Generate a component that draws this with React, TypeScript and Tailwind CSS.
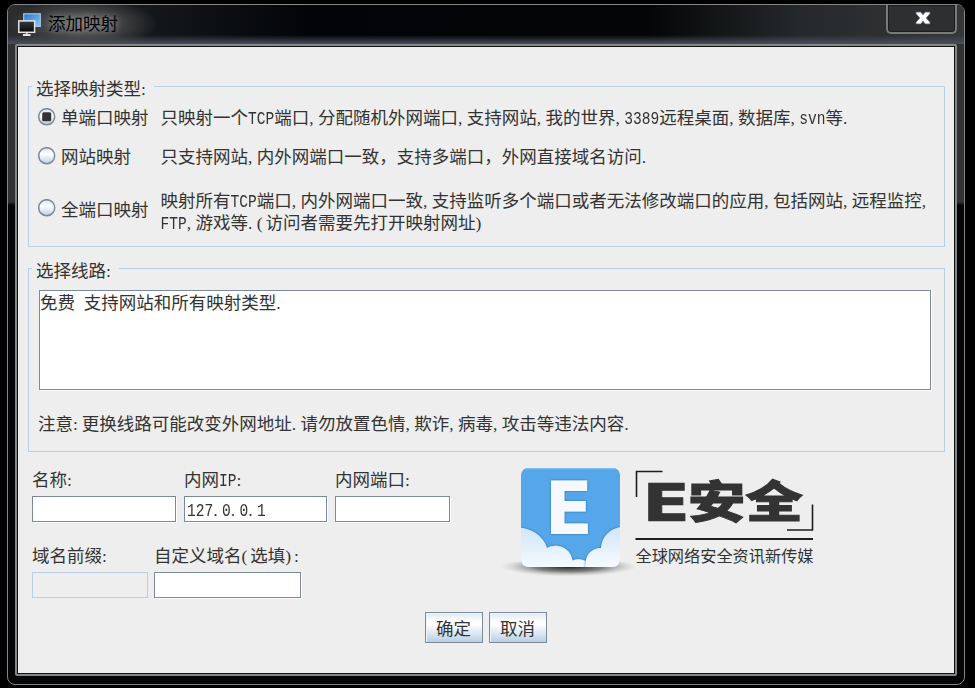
import type { ReactNode } from 'react';

const CJK = "font-['Noto_Sans_CJK_SC',sans-serif]";
const LATIN = "inline-block h-[14px] origin-[0_11px] scale-y-[1.2] whitespace-pre font-['Liberation_Mono',monospace] text-[14.58px] leading-[14px]";
const PUNCT = "inline-block h-[18px] w-[8.75px] whitespace-pre font-['Liberation_Serif',serif] leading-[18px]";

/* Sets half-width characters on the half-em grid of the Chinese text around them. */
function T({ children }: { children: string }) {
  const parts = children.match(/[a-zA-Z0-9 ]+|[.,:()]|[^\x20-\x7e]+/g) ?? [];
  return (
    <>
      {parts.map((p, i) => {
        const style = /^[a-zA-Z0-9 ]/.test(p) ? LATIN : /^[.,:()]/.test(p) ? PUNCT : '';
        return <span key={i} className={style}>{p}</span>;
      })}
    </>
  );
}

function Radio({ checked = false }: { checked?: boolean }) {
  return (
    <svg width="18" height="18" viewBox="0 0 18 18" className="-mt-px shrink-0">
      <defs>
        <linearGradient id="radioFill" x1="0" y1="0" x2="0" y2="1">
          <stop offset="0" stopColor="#d3e2ef" />
          <stop offset="0.4" stopColor="#ffffff" />
          <stop offset="1" stopColor="#b8cfe5" />
        </linearGradient>
      </defs>
      <circle cx="8.7" cy="8.7" r="8" fill="url(#radioFill)" stroke="#7a8a99" strokeWidth="1.5" />
      {checked && <rect x="4.2" y="4.2" width="9" height="9" rx="1.5" fill="#333" />}
    </svg>
  );
}

function Option({ label, checked, height, children }: { label: string; checked?: boolean; height: string; children: ReactNode }) {
  return (
    <div className={`flex items-center whitespace-nowrap ${height}`}>
      <Radio checked={checked} />
      <span className="ml-[5px] w-[99.5px] shrink-0">{label}</span>
      <span>{children}</span>
    </div>
  );
}

function Field({ label, width, value = '', disabled = false }: { label: string; width: string; value?: string; disabled?: boolean }) {
  return (
    <label className={`flex flex-col ${width}`}>
      <span className="h-[28px] whitespace-nowrap"><T>{label}</T></span>
      <span
        className={`block h-[26px] w-full border pl-[2px] pt-px ${
          disabled ? 'border-[#b8cfe5] bg-[#eeeeee]' : 'border-[#7a8a99] bg-white shadow-[1px_1px_0_#fff]'
        }`}
      >
        <T>{value}</T>
      </span>
    </label>
  );
}

function Button({ children }: { children: string }) {
  return (
    <button className="h-[31px] w-[58px] border border-[#7a8a99] bg-[linear-gradient(#dde8f3,#ffffff_30%,#ffffff_40%,#b8cfe5)] pr-px leading-[29px] shadow-[inset_1px_1px_0_#eef4fa]">
      {children}
    </button>
  );
}

function MonitorsIcon() {
  return (
    <svg width="24" height="24" viewBox="0 0 24 24">
      <defs>
        <linearGradient id="screen" x1="0" y1="0" x2="1" y2="1">
          <stop offset="0" stopColor="#2777c9" />
          <stop offset="1" stopColor="#86c8ff" />
        </linearGradient>
        <linearGradient id="darkScreen" x1="0" y1="0" x2="0" y2="1">
          <stop offset="0" stopColor="#3a3a3a" />
          <stop offset="1" stopColor="#080808" />
        </linearGradient>
      </defs>
      <rect x="5.7" y="1.8" width="16.6" height="12.6" fill="url(#screen)" stroke="#a9c4da" strokeWidth="1.2" />
      <rect x="0.8" y="8.9" width="15.8" height="11.4" fill="url(#darkScreen)" stroke="#e4e4e4" strokeWidth="1.5" />
      <path d="M8.700 20.500v2M5 23h7.500" stroke="#e4e4e4" strokeWidth="1.8" />
    </svg>
  );
}

function Logo() {
  return (
    <svg width="330" height="135" viewBox="500 455 330 135" className="mt-px">
      <defs>
        <linearGradient id="cloud" x1="0" y1="0" x2="0" y2="1">
          <stop offset="0" stopColor="#d0e6fa" />
          <stop offset="1" stopColor="#fdfeff" />
        </linearGradient>
        <radialGradient id="ground">
          <stop offset="0" stopColor="#111" stopOpacity="0.95" />
          <stop offset="0.5" stopColor="#333" stopOpacity="0.6" />
          <stop offset="1" stopColor="#999" stopOpacity="0" />
        </radialGradient>
        <clipPath id="tile"><rect x="521" y="468" width="99" height="99" rx="7" /></clipPath>
        <clipPath id="below"><rect x="490" y="562" width="160" height="30" /></clipPath>
        <filter id="soft" x="-20%" y="-20%" width="140%" height="140%">
          <feDropShadow dx="0" dy="0" stdDeviation="1.3" floodColor="#155a99" floodOpacity="0.8" />
        </filter>
      </defs>
      <ellipse cx="569" cy="566.5" rx="68" ry="10" fill="url(#ground)" clipPath="url(#below)" />
      <rect x="521" y="468" width="99" height="99" rx="7" fill="#56a7e9" />
      <path d="M526 468.600h89" stroke="#7dc0f5" strokeWidth="1.2" />
      <g clipPath="url(#tile)">
        <g fill="url(#cloud)" filter="url(#soft)">
          <path d="M515 528c14-1.500 28 7 32 20 10-6 24 0 25.500 12.500 5-2 9-1.500 13 .5l1.500 14h-72z" />
        </g>
        <g fill="url(#cloud)" filter="url(#soft)">
          <path d="M586.500 574c-4-16 3-26 14.500-26 1-12 9-21 26-22v48z" />
        </g>
      </g>
      <text
        transform="translate(544.400 534) scale(0.98 1)"
        className="font-['DejaVu_Sans',sans-serif] font-bold"
        fontSize="72.5"
        fill="#f5f9fe"
        filter="url(#soft)"
      >
        E
      </text>
      <path d="M636.500 497V471.500h26M812.500 504.500V530h-25.500" fill="none" stroke="#1d1d1f" strokeWidth="1.6" />
      <text
        transform="translate(642.300 520.700) scale(1.36 1)"
        className="font-['DejaVu_Sans',sans-serif] font-bold"
        fontSize="51.5"
        fill="#333"
        stroke="#333"
        strokeWidth="0.6"
      >
        E
      </text>
      <text
        transform="translate(688 517.500) scale(1.29 1)"
        className="font-['Noto_Sans_CJK_SC',sans-serif] font-black"
        fontSize="44.5"
        fill="#333"
        stroke="#333"
        strokeWidth="1"
      >
        安全
      </text>
      <path d="M635.500 539H813" stroke="#1d1d1f" strokeWidth="2" />
      <text
        x="635.5"
        y="562"
        textLength="178"
        className="font-['Noto_Sans_CJK_SC',sans-serif]"
        fontSize="16.2"
        fill="#333"
      >
        全球网络安全资讯新传媒
      </text>
    </svg>
  );
}

export default function App() {
  return (
    <div className={`h-[688px] w-[975px] overflow-hidden bg-black pl-[7px] pt-[4px] text-[17.5px] leading-[22px] text-[#333] ${CJK}`}>
      <div className="flex h-[681px] w-[958px] flex-col rounded-[8px] border-[1.5px] border-[#858787] bg-[linear-gradient(#303234_0,#303234_197px,#040607_200px)]">
        <header className="flex h-[39px] shrink-0 justify-between rounded-t-[6px] bg-[radial-gradient(ellipse_75px_26px_at_75px_19px,#777_0%,#55555599_55%,transparent_100%),linear-gradient(to_top,#46505f_0,#46505f00_9px),linear-gradient(90deg,#2b2d2f_0,#15181b_140px,#020407_300px,#030506_640px,#25282a_790px,#353638)]">
          <div className="flex pl-[10px] pt-[7px]">
            <MonitorsIcon />
            <h1 className="ml-[6px] text-black [text-shadow:0_0_6px_#999]">添加映射</h1>
          </div>
          <button className="mr-[7px] flex h-[29px] w-[71px] items-center justify-center rounded-b-[5px] border-2 border-t-0 border-[#77797b] bg-[#2d2f31] pb-[2px] pl-[2px] shadow-[inset_0_0_0_1px_#1b1c1d]">
            <svg width="16" height="14" viewBox="0 0 16 14">
              <path
                d="M1 1h4.800l2.200 2.800L10.200 1H15v1.800L11.300 7l3.700 4.200V13h-4.800L8 10.200 5.800 13H1v-1.800L4.700 7 1 2.800z"
                fill="#fff"
                stroke="#555d66"
                strokeWidth="0.8"
              />
            </svg>
          </button>
        </header>

        <main className="mx-[7px] flex h-[632px] flex-col rounded-[2px] border-2 border-[#858787] bg-[#eeeeee] pl-[11px] pt-[29px] shadow-[inset_0_0_0_1px_#111]">
          <fieldset className="h-[172px] w-[917px] border border-[#b8cfe5] pl-[9px] pr-0 pt-px">
            <legend className="-ml-[6px] px-[4px] pt-[3px] leading-[19px]"><T>选择映射类型:</T></legend>
            <Option label="单端口映射" height="h-[36px]" checked>
              <T>只映射一个TCP端口,分配随机外网端口,支持网站,我的世界,3389远程桌面,数据库,svn等.</T>
            </Option>
            <Option label="网站映射" height="h-[42px]">
              <T>只支持网站,内外网端口一致，支持多端口，外网直接域名访问.</T>
            </Option>
            <Option label="全端口映射" height="h-[63px]">
              <span className="block pt-[4px]"><T>映射所有TCP端口,内外网端口一致,支持监听多个端口或者无法修改端口的应用,包括网站,远程监控,</T></span>
              <span className="block"><T>FTP,游戏等.(访问者需要先打开映射网址)</T></span>
            </Option>
          </fieldset>

          <fieldset className="mt-[10px] h-[195px] w-[917px] border border-[#b8cfe5] pl-[10px]">
            <legend className="-ml-[7px] px-[4px] pt-[3px] leading-[19px]"><T>选择线路:</T></legend>
            <div className="mt-[10px] h-[100px] w-[892px] border border-[#7a8a99] bg-white shadow-[1px_1px_0_#fff]">
              <T>免费 支持网站和所有映射类型.</T>
            </div>
            <p className="-ml-px mt-[22px]"><T>注意:更换线路可能改变外网地址.请勿放置色情,欺诈,病毒,攻击等违法内容.</T></p>
          </fieldset>

          <section className="flex h-[143px] pl-[4px] pt-[2px]">
            <div className="flex w-[468px] flex-col gap-[22px] pt-[14px]">
              <div className="flex gap-[8px]">
                <Field label="名称:" width="w-[144px]" />
                <Field label="内网IP:" width="w-[143px]" value="127.0.0.1" />
                <Field label="内网端口:" width="w-[115px]" />
              </div>
              <div className="flex gap-[6px]">
                <Field label="域名前缀:" width="w-[116px]" disabled />
                <Field label="自定义域名(选填):" width="w-[147px]" />
              </div>
            </div>
            <Logo />
          </section>

          <footer className="flex gap-[6px] pl-[397px] pt-[17px]">
            <Button>确定</Button>
            <Button>取消</Button>
          </footer>
        </main>
      </div>
    </div>
  );
}
